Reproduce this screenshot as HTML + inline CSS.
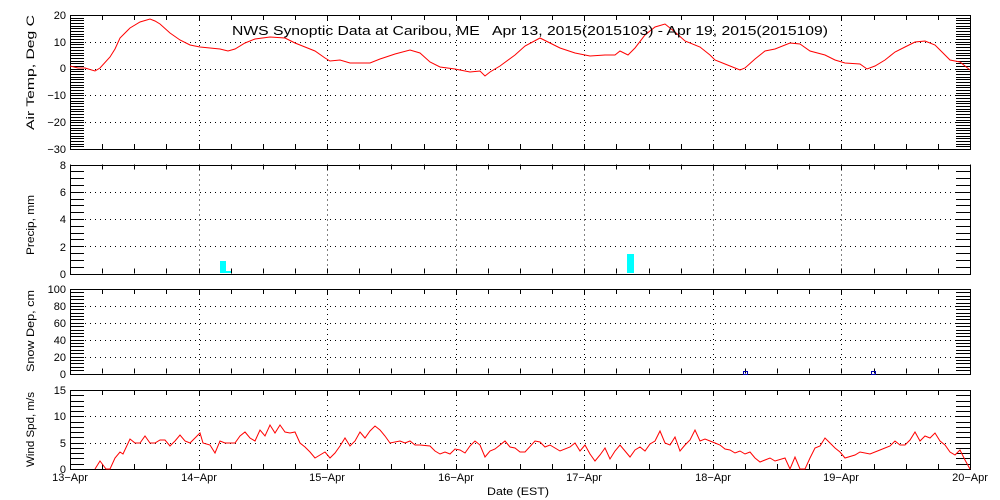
<!DOCTYPE html>
<html><head><meta charset="utf-8"><style>
html,body{margin:0;padding:0;background:#fff;width:1000px;height:500px;overflow:hidden}
svg{display:block}
text{font-family:"Liberation Sans",sans-serif;font-size:11px;fill:#000}
</style></head><body>
<svg id="s" width="1000" height="500" viewBox="0 0 1000 500" xmlns="http://www.w3.org/2000/svg">
<g id="g" stroke="#000" fill="none" shape-rendering="crispEdges"></g>
<polyline fill="none" stroke="#f00" stroke-width="1" points="70,66 78,68 85,68 95,71 100,68 110,57 115,49 120,38 130,28 140,22 150,19 155,21 160,24 170,33 180,40 190,45 200,47 210,48 220,49 228,51 235,49 245,43 255,39 270,37 285,38 295,43 305,47 315,51 325,58 330,61 340,60 350,63 370,63 380,59 395,54 410,50 420,53 430,62 440,67 455,69 470,72 480,71 485,76 490,72 500,66 515,55 525,46 540,38 550,43 560,48 575,53 590,56 605,55 615,55 620,51 628,55 635,48 645,35 655,27 665,24 675,32 685,41 700,47 710,55 715,60 725,64 740,70 745,68 755,59 765,51 775,49 790,43 800,44 810,51 825,55 835,60 845,63 860,64 867,69 875,66 885,60 895,52 905,47 915,42 925,41 935,45 942,52 950,60 960,62 970,70"/>
<polyline fill="none" stroke="#f00" stroke-width="1" points="95,469 100,461 103,465 106,469 110,469 115,458 120,452 123,454 130,439 135,443 140,443 145,436 150,443 155,443 160,440 165,440 170,446 175,441 180,435 185,441 190,443 200,433 203,443 210,445 215,453 220,441 225,443 235,443 240,436 245,432 250,438 255,441 260,430 265,436 270,425 275,433 280,425 285,432 290,433 295,432 300,443 305,447 310,452 315,458 320,455 325,452 330,458 335,453 340,446 345,438 350,446 355,441 360,432 365,438 370,431 375,426 380,430 385,436 390,443 400,441 405,443 410,441 415,445 420,445 430,446 435,451 440,454 445,452 450,454 455,449 460,450 465,453 470,446 475,441 480,445 485,457 490,451 495,449 500,445 505,441 510,447 515,448 520,452 525,452 535,441 540,442 545,447 550,445 555,448 560,451 570,447 575,443 580,451 585,445 590,454 595,461 600,455 605,448 610,459 615,451 620,445 625,451 630,457 635,450 640,447 645,451 650,444 655,441 660,431 665,443 670,445 675,437 680,451 685,445 690,440 695,430 700,441 705,439 710,441 715,443 720,445 725,449 730,450 735,453 740,451 745,454 750,452 755,458 760,462 765,460 770,458 775,461 785,458 790,469 795,457 800,469 805,469 810,458 815,448 820,446 825,438 830,443 835,448 840,452 845,458 855,455 860,452 870,454 880,450 890,446 895,441 900,445 905,445 910,440 915,432 920,441 925,436 930,438 935,433 940,441 945,445 950,452 955,455 960,450 965,460 970,469"/>
<rect x="220" y="261" width="6" height="12" fill="#0ff"/>
<rect x="226" y="271" width="5" height="2" fill="#0ff"/>
<rect x="627" y="254" width="7" height="19" fill="#0ff"/>
<rect x="743.5" y="371.5" width="4" height="3" fill="none" stroke="#00a"/>
<rect x="871.5" y="371.5" width="4" height="3" fill="none" stroke="#00a"/>
<text x="232" y="35" textLength="596" lengthAdjust="spacingAndGlyphs" style="font-size:13px;white-space:pre" xml:space="preserve">NWS Synoptic Data at Caribou, ME   Apr 13, 2015(2015103) - Apr 19, 2015(2015109)</text>
<g text-anchor="end">
<text x="66" y="19">20</text><text x="66" y="46">10</text><text x="66" y="72">0</text><text x="66" y="99">−10</text><text x="66" y="126">−20</text><text x="66" y="153">−30</text>
<text x="66" y="169">8</text><text x="66" y="196">6</text><text x="66" y="223">4</text><text x="66" y="251">2</text><text x="66" y="278">0</text>
<text x="66" y="293">100</text><text x="66" y="310">80</text><text x="66" y="327">60</text><text x="66" y="344">40</text><text x="66" y="361">20</text><text x="66" y="378">0</text>
<text x="66" y="394">15</text><text x="66" y="420">10</text><text x="66" y="447">5</text><text x="66" y="473">0</text>
</g>
<g text-anchor="middle">
<text x="70" y="481">13−Apr</text><text x="199" y="481">14−Apr</text><text x="327" y="481">15−Apr</text><text x="456" y="481">16−Apr</text><text x="584" y="481">17−Apr</text><text x="713" y="481">18−Apr</text><text x="841" y="481">19−Apr</text><text x="970" y="481">20−Apr</text>
<text x="518" y="495" textLength="62" lengthAdjust="spacingAndGlyphs">Date (EST)</text>
</g>
<text transform="translate(34,130) rotate(-90)" textLength="115" lengthAdjust="spacingAndGlyphs">Air Temp, Deg C</text>
<text transform="translate(34,255) rotate(-90)" textLength="60" lengthAdjust="spacingAndGlyphs">Precip, mm</text>
<text transform="translate(34,372) rotate(-90)" textLength="82" lengthAdjust="spacingAndGlyphs">Snow Dep, cm</text>
<text transform="translate(34,467) rotate(-90)" textLength="75" lengthAdjust="spacingAndGlyphs">Wind Spd, m/s</text>
</svg>
<script>
var g=document.getElementById('g'),h='';
function L(x1,y1,x2,y2,d){h+='<line x1="'+x1+'" y1="'+y1+'" x2="'+x2+'" y2="'+y2+'"'+(d?' stroke-dasharray="1,4"':'')+'/>';}
var X0=70,X1=970;
var P=[[15,149,-30,20,1,10],[164.5,273.5,0,8,0.5,2],[289,373.5,0,100,4,20],[390,469,0,15,1,5]];
P.forEach(function(p){
 var t=p[0],b=p[1],lo=p[2],hi=p[3];
 h+='<rect x="'+X0+'.5" y="'+Math.round(t)+'.5" width="'+(X1-X0)+'" height="'+Math.round(b-t)+'"/>';
 for(var d=1;d<7;d++){var x=Math.round(X0+d*128.57)+.5;L(x,t,x,b,1);}
 for(var q=0;q<=28;q++){var x=Math.round(X0+q*32.143)+.5;L(x,t,x,t+5);L(x,b,x,b-5);}
 for(var v=lo;v<=hi+1e-6;v+=p[4]){var y=Math.round(b-(v-lo)/(hi-lo)*(b-t))+.5;L(X0,y,X0+14,y);L(X1-14,y,X1,y);}
 for(var v=lo+p[5];v<hi-1e-6;v+=p[5]){var y=Math.round(b-(v-lo)/(hi-lo)*(b-t))+.5;L(X0,y,X1,y,1);}
});
g.innerHTML=h;
</script>
</body></html>
